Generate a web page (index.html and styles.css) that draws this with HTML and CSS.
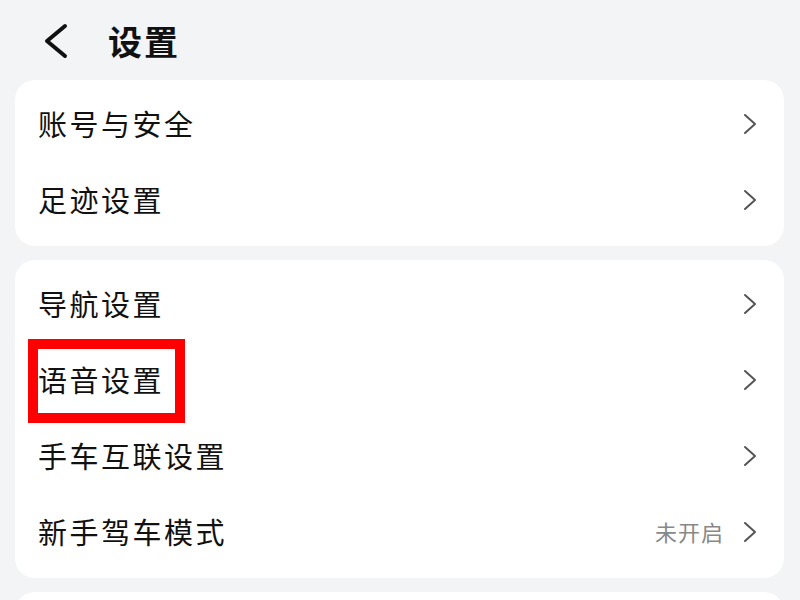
FILE: index.html
```html
<!DOCTYPE html>
<html lang="zh">
<head>
    <meta charset="UTF-8">
    <title>设置</title>
    <link rel="stylesheet" href="styles.css">
</head>
<body>

<div class="header">
    <svg class="back" width="28" height="36" viewBox="0 0 28 36">
        <path d="M23 3 L5 18 L23 33" fill="none" stroke="#111" stroke-width="4" stroke-linecap="round" stroke-linejoin="round"/>
    </svg>
    <h1 class="title">设置</h1>
</div>

<div class="card">
    <div class="row"><span class="label">账号与安全</span><svg class="chev" width="14" height="22" viewBox="0 0 14 22"><path d="M2 2 L12 11 L2 20"/></svg></div>
    <div class="row"><span class="label">足迹设置</span><svg class="chev" width="14" height="22" viewBox="0 0 14 22"><path d="M2 2 L12 11 L2 20"/></svg></div>
</div>

<div class="card">
    <div class="row"><span class="label">导航设置</span><svg class="chev" width="14" height="22" viewBox="0 0 14 22"><path d="M2 2 L12 11 L2 20"/></svg></div>
    <div class="row"><span class="label">语音设置</span><svg class="chev" width="14" height="22" viewBox="0 0 14 22"><path d="M2 2 L12 11 L2 20"/></svg><span class="mark"></span></div>
    <div class="row"><span class="label">手车互联设置</span><svg class="chev" width="14" height="22" viewBox="0 0 14 22"><path d="M2 2 L12 11 L2 20"/></svg></div>
    <div class="row"><span class="label">新手驾车模式</span><span class="value">未开启</span><svg class="chev" width="14" height="22" viewBox="0 0 14 22"><path d="M2 2 L12 11 L2 20"/></svg></div>
</div>

<div class="card"></div>

</body>
</html>
```

FILE: styles.css
```css
html {
    overflow: hidden;
}

body {
    margin: 0;
    background: #f3f4f6;
    font-family: "Noto Sans CJK SC", "Noto Sans", sans-serif;
    color: #111;
    height: 600px;
    overflow: hidden;
}

.header {
    height: 80px;
    display: flex;
    align-items: center;
    padding-left: 42px;
}

.back {
    display: block;
    margin-top: 2px;
}

.title {
    margin: 0 0 0 38px;
    font-size: 34px;
    font-weight: bold;
    letter-spacing: 2px;
}

.card {
    margin: 0 16px 14px 15px;
    background: #fff;
    border-radius: 20px;
    padding: 7px 0;
    min-height: 60px;
}

.row {
    height: 76px;
    box-sizing: border-box;
    display: flex;
    align-items: center;
    padding: 0 27px 5px 23px;
    position: relative;
}

.label {
    flex: 1;
    font-size: 29px;
    letter-spacing: 2.5px;
}

.value {
    font-size: 22px;
    color: #888;
    margin-right: 19px;
    letter-spacing: 1px;
}

.chev {
    display: block;
    margin-top: 3px;
}

.chev path {
    fill: none;
    stroke: #555;
    stroke-width: 2;
    stroke-linecap: round;
    stroke-linejoin: round;
}

.mark {
    position: absolute;
    left: 13px;
    top: -4px;
    width: 137px;
    height: 64px;
    border: 10px solid #ff0000;
}
```
